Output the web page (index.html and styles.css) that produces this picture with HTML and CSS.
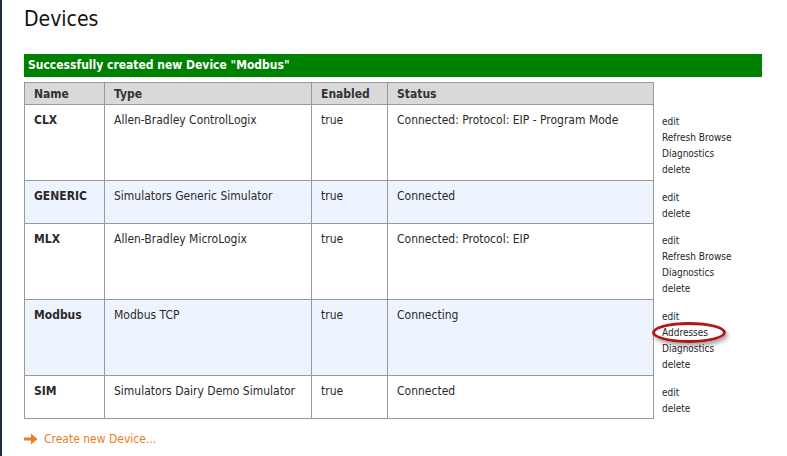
FILE: index.html
```html
<!DOCTYPE html>
<html lang="en">

<head>
    <meta charset="UTF-8">
    <meta name="viewport" content="width=device-width, initial-scale=1.0">
    <title>Devices</title>
    <link rel="stylesheet" href="styles.css">
</head>

<body>
    <div class="content">
        <h1>Devices</h1>

        <div class="notice">Successfully created new Device "Modbus"</div>

        <table class="devices">
            <colgroup>
                <col class="c-name">
                <col class="c-type">
                <col class="c-enabled">
                <col class="c-status">
                <col class="c-actions">
            </colgroup>
            <thead>
                <tr>
                    <th>Name</th>
                    <th>Type</th>
                    <th>Enabled</th>
                    <th>Status</th>
                    <th class="actions"></th>
                </tr>
            </thead>
            <tbody>
                <tr>
                    <td class="name">CLX</td>
                    <td>Allen-Bradley ControlLogix</td>
                    <td>true</td>
                    <td>Connected: Protocol: EIP - Program Mode</td>
                    <td class="actions">
                        <a href="#">edit</a>
                        <a href="#">Refresh Browse</a>
                        <a href="#">Diagnostics</a>
                        <a href="#">delete</a>
                    </td>
                </tr>
                <tr class="alt">
                    <td class="name">GENERIC</td>
                    <td>Simulators Generic Simulator</td>
                    <td>true</td>
                    <td>Connected</td>
                    <td class="actions">
                        <a href="#">edit</a>
                        <a href="#">delete</a>
                    </td>
                </tr>
                <tr>
                    <td class="name">MLX</td>
                    <td>Allen-Bradley MicroLogix</td>
                    <td>true</td>
                    <td>Connected: Protocol: EIP</td>
                    <td class="actions">
                        <a href="#">edit</a>
                        <a href="#">Refresh Browse</a>
                        <a href="#">Diagnostics</a>
                        <a href="#">delete</a>
                    </td>
                </tr>
                <tr class="alt">
                    <td class="name">Modbus</td>
                    <td>Modbus TCP</td>
                    <td>true</td>
                    <td>Connecting</td>
                    <td class="actions">
                        <a href="#">edit</a>
                        <a href="#" class="marked">Addresses<span class="ring"></span></a>
                        <a href="#">Diagnostics</a>
                        <a href="#">delete</a>
                    </td>
                </tr>
                <tr>
                    <td class="name">SIM</td>
                    <td>Simulators Dairy Demo Simulator</td>
                    <td>true</td>
                    <td>Connected</td>
                    <td class="actions">
                        <a href="#">edit</a>
                        <a href="#">delete</a>
                    </td>
                </tr>
            </tbody>
        </table>

        <a class="create" href="#">
            <svg width="14" height="12" viewBox="0 0 14 12">
                <path d="M0 4.5 H7 V0.5 L13.5 6 L7 11.5 V7.5 H0 Z" fill="#ee7d22" />
            </svg>
            Create new Device...
        </a>
    </div>
</body>

</html>
```

FILE: styles.css
```css
* {
    margin: 0;
    padding: 0;
}
body {
    font-family: "DejaVu Sans Condensed", "DejaVu Sans", sans-serif;
    font-size: 12px;
    color: #2a2a2a;
    background: #fff;
    border-left: 2px solid #1c2a47;
    min-height: 456px;
    box-sizing: border-box;
}
.content {
    width: 738px;
    padding: 0 0 0 22px;
}
h1 {
    font-size: 21px;
    font-weight: normal;
    color: #111;
    padding-top: 7px;
    height: 47px;
}
.notice {
    background: #008000;
    color: #fff;
    font-weight: bold;
    font-size: 12px;
    height: 23px;
    line-height: 23px;
    padding-left: 4px;
    margin-bottom: 5px;
}
.devices {
    border-collapse: collapse;
    table-layout: fixed;
    width: 738px;
}
.c-name { width: 80px; }
.c-type { width: 207px; }
.c-enabled { width: 76px; }
.c-status { width: 266px; }
.devices th,
.devices td {
    border: 1px solid #999;
    text-align: left;
    vertical-align: top;
    line-height: 15px;
    padding: 8px 9px 4px;
}
.devices th {
    background: #d9d9d9;
    padding: 4px 9px 2px;
    color: #333;
}
.devices td.name {
    font-weight: bold;
}
.devices tr.alt td {
    background: #eef4fd;
}
.devices th.actions,
.devices td.actions,
.devices tr.alt td.actions {
    border: none;
    border-left: 1px solid #999;
    background: #fff;
}
.devices td.actions {
    padding: 9px 8px 2px;
    font-size: 10px;
    line-height: 16px;
}
.actions a {
    display: block;
    color: #1e1e2a;
    text-decoration: none;
}
.actions a:nth-child(4) {
    margin-bottom: 1px;
}
.marked {
    position: relative;
}
.ring {
    position: absolute;
    left: -10px;
    top: -3px;
    width: 68px;
    height: 15px;
    border: 3px solid #b01818;
    border-radius: 50%;
    box-shadow: 2px 3px 4px rgba(0, 0, 0, 0.35);
}
.create {
    display: inline-flex;
    align-items: center;
    gap: 6px;
    margin-top: 13px;
    color: #ee7d22;
    text-decoration: none;
    font-size: 12px;
}
```
